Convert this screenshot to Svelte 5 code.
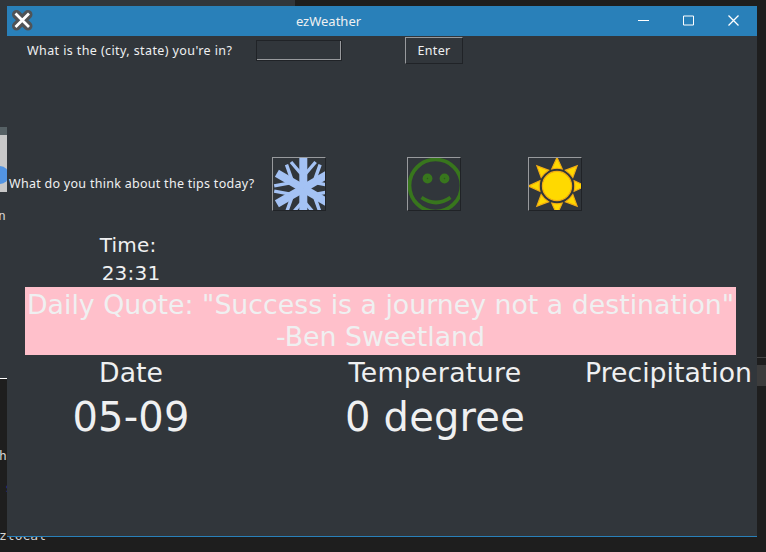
<script>
  const arms = [0, 60, 120, 180, 240, 300];
  const rays = [0, 45, 90, 135, 180, 225, 270, 315];
</script>

<div class="desktop">
  <i class="strip top"></i><i class="strip left"></i><i class="strip bar"></i>
  <i class="strip panel"></i><i class="strip dot"></i><i class="strip rule"></i>
  <i class="strip thin"></i><i class="strip block"></i>
  <span class="code" style="top:207px;left:-2px">n</span>
  <span class="code" style="top:447px;left:-1px">h</span>
  <span class="code blue" style="top:479px;left:5px">s</span>
  <span class="code" style="top:527px;left:-1px">zlocal</span>

  <main class="window">
    <header>
      <svg class="logo" width="24" height="24" viewBox="0 0 24 24">
        <path d="M6.500 6.500L18 18M18 6.500L6.500 18" stroke="#505356" stroke-width="9" stroke-linecap="round" />
        <path d="M5.500 5.500L19 19M19 5.500L5.500 19" stroke="#fff" stroke-width="2.800" />
      </svg>
      <span class="title">ezWeather</span>
      <svg class="controls" width="104" height="14" viewBox="0 0 104 14" fill="none" stroke="#fff">
        <path d="M1 6.500h11" />
        <path d="M46.500 2h10v9h-10z" />
        <path d="M91.500 1.500l10 10M101.500 1.500l-10 10" stroke-width="1.300" />
      </svg>
    </header>

    <section class="ask">
      <label for="city">What is the (city, state) you're in?</label>
      <input id="city" />
      <button class="enter">Enter</button>
    </section>

    <section class="tips">
      <p>What do you think about the tips today?</p>
      <button class="pic" aria-label="Cold">
        <svg width="52" height="52" viewBox="0 0 52 52">
          <g transform="translate(30.300 30.500)" fill="none" stroke="#a4c2f4">
            {#each arms as a}
              <g transform="rotate({a})">
                <path d="M0 0V-30.500" stroke-width="8" />
                <path d="M-12.300 -26.500L-2.500 -15M12.300 -26.500L2.500 -15" stroke-width="3.400" />
              </g>
            {/each}
          </g>
        </svg>
      </button>
      <button class="pic" aria-label="Fine">
        <svg width="52" height="52" viewBox="0 0 52 52" fill="none" stroke="#38761d">
          <circle cx="27.500" cy="27.500" r="26" stroke-width="3.700" />
          <circle cx="19.500" cy="20.500" r="4.900" fill="#38761d" stroke="none" />
          <circle cx="36.500" cy="20.500" r="4.900" fill="#38761d" stroke="none" />
          <circle cx="19.500" cy="20.500" r=".3" stroke="#28551c" />
          <circle cx="36.500" cy="20.500" r=".3" stroke="#28551c" />
          <path d="M13.500 39.500Q28 49.500 42.500 39.500" stroke-width="3.700" />
        </svg>
      </button>
      <button class="pic" aria-label="Hot">
        <svg width="52" height="52" viewBox="0 0 52 52">
          <g transform="translate(28 28)" fill="#ffd900" stroke="#f1ad12" stroke-width="1.200">
            <circle r="14.600" />
            {#each rays as a}
              <path d="M0 -28.500L5.200 -17.200Q0 -18.300 -5.200 -17.200Z" transform="rotate({a})" />
            {/each}
          </g>
        </svg>
      </button>
    </section>

    <section class="time"><div class="t1">Time:</div><div class="t2">23:31</div></section>

    <section class="quote">
      <div class="q1">Daily Quote: "Success is a journey not a destination"</div>
      <div>-Ben Sweetland</div>
    </section>

    <section class="forecast">
      <h2>Date</h2><h2>Temperature</h2><h2>Precipitation</h2>
      <strong>05-09</strong><strong>0 degree</strong>
    </section>
  </main>
</div>

<style>
  .desktop { position: relative; width: 766px; height: 552px; overflow: hidden; background: #1e1e1e; }
  .strip { position: absolute; }
  .top { left: 0; top: 0; width: 295px; height: 6px; background: #31363b; }
  .left { left: 0; top: 0; width: 7px; height: 378px; background: #31363b; }
  .bar { left: 0; top: 127px; width: 7px; height: 8px; background: #566165; }
  .panel { left: 0; top: 135px; width: 7px; height: 57px; background: #c8c8c8; }
  .dot { left: -11px; top: 166px; width: 20px; height: 18px; border-radius: 9px; background: #5294e2; }
  .rule { left: 0; top: 378px; width: 7px; height: 1px; background: #fff; }
  .thin { left: 757px; top: 357px; width: 9px; height: 1px; background: #444; }
  .block { left: 757px; top: 365px; width: 9px; height: 21px; background: #3c3c3c; }
  .code { position: absolute; font: 13px/18px "DejaVu Sans Mono", monospace; color: #d4d4d4; }
  .blue { color: #262a80; }
  .window {
    position: absolute; left: 7px; top: 6px; width: 750px; height: 531px; box-sizing: border-box;
    display: flex; flex-direction: column; overflow: hidden;
    background: #31363b; border-bottom: 1px solid #2980b9; color: #eff0f1;
    font: 12.500px/18px "Noto Sans", sans-serif;
  }
  header { height: 30px; flex: none; display: flex; align-items: center; background: #2980b9; }
  .logo { margin-left: 3px; margin-top: -2px; width: 24px; fill: none; }
  .title { width: 589px; text-align: center; font-size: 13px; margin-top: -1px; }
  .controls { margin-left: 14px; margin-top: 0; }
  .ask { height: 121px; flex: none; display: flex; align-items: flex-start; }
  label { margin: 6px 0 0 20px; width: 229px; white-space: nowrap; letter-spacing: 0.400px; }
  input {
    width: 86px; height: 21px; margin: 4px 0 0; box-sizing: border-box; padding: 0;
    border: 1px solid #202327; background: #31363b;
    box-shadow: inset -1px -1px #989a9d; border-radius: 0;
  }
  button { box-sizing: border-box; padding: 0; background: #31363b; border: 1px solid; border-color: #989a9d #202327 #202327 #989a9d; border-radius: 0; color: #eff0f1; }
  .enter { width: 58px; height: 27px; margin: 1px 0 0 63px; font: 12.500px/18px "Noto Sans", sans-serif; letter-spacing: 0.350px; }
  .tips { height: 54px; flex: none; display: flex; }
  p { margin: 18px 0 0 2px; width: 263px; white-space: nowrap; letter-spacing: 0.280px; }
  .pic { width: 54px; height: 54px; flex: none; }
  .pic + .pic { margin-left: 81px; }
  .pic + .pic + .pic { margin-left: 67px; }
  .pic svg { display: block; }
  .time, .quote, .forecast { font-family: "DejaVu Sans", sans-serif; }
  .time { width: 248px; height: 76px; flex: none; box-sizing: border-box; padding-top: 20px; font-size: 20px; line-height: 28px; letter-spacing: 0.200px; text-align: center; }
  .t1 { padding-right: 6px; }
  .quote { width: 711px; height: 68px; flex: none; box-sizing: border-box; margin-left: 18px; padding-top: 2px; background: #ffc0cb; font-size: 26.780px; line-height: 32px; text-align: center; white-space: nowrap; }
  .forecast { display: grid; grid-template-columns: 248px 35px 290px 177px; grid-template-rows: 36px 52px; text-align: center; white-space: nowrap; }
  h2 { margin: 0; font-size: 26.700px; font-weight: 400; line-height: 36px; }
  h2:nth-child(2) { letter-spacing: 0.350px; }
  h2:nth-child(2), strong:nth-of-type(2) { grid-column: 3; }
  strong { font-size: 40px; font-weight: 400; line-height: 52px; letter-spacing: 0.200px; }
</style>
